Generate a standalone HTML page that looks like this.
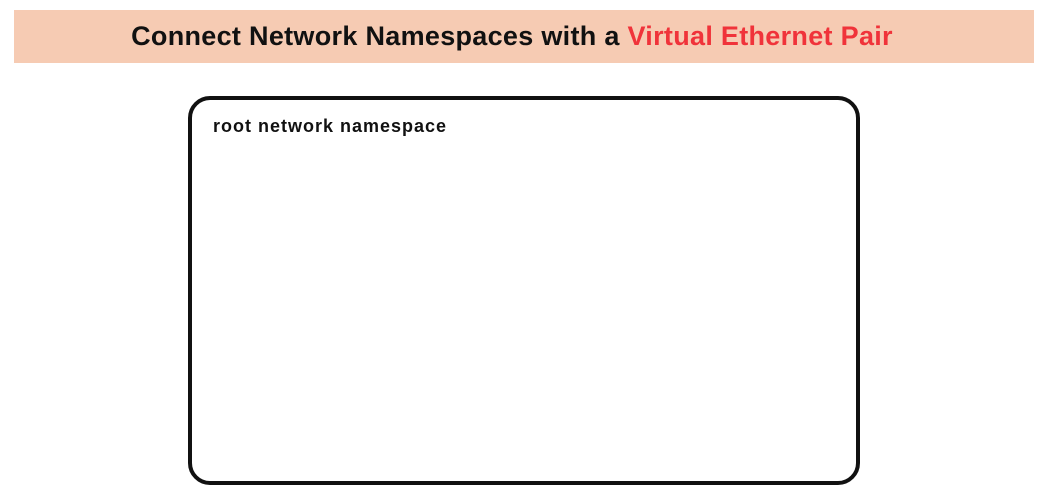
<!DOCTYPE html>
<html><head><style>
html,body{margin:0;padding:0;background:#fff;width:1043px;height:500px;overflow:hidden}
.banner{position:absolute;left:14px;top:10px;width:1020px;height:53px;background:#f6cbb3}
.title{position:absolute;left:-12px;top:0;width:1020px;height:53px;line-height:53px;text-align:center;font-family:"Liberation Sans",sans-serif;font-weight:bold;font-size:27px;color:#111;letter-spacing:0.3px}
.title span{color:#f0333a}
.box{position:absolute;left:188px;top:96px;width:664px;height:381px;border:4px solid #111;border-radius:22px}
.lbl{position:absolute;left:213px;top:116px;font-family:"Liberation Sans",sans-serif;font-weight:bold;font-size:18px;color:#111;letter-spacing:1px}
</style></head><body>
<div class="banner"><div class="title">Connect Network Namespaces with a <span>Virtual Ethernet Pair</span></div></div>
<div class="box"></div>
<div class="lbl">root network namespace</div>
</body></html>
